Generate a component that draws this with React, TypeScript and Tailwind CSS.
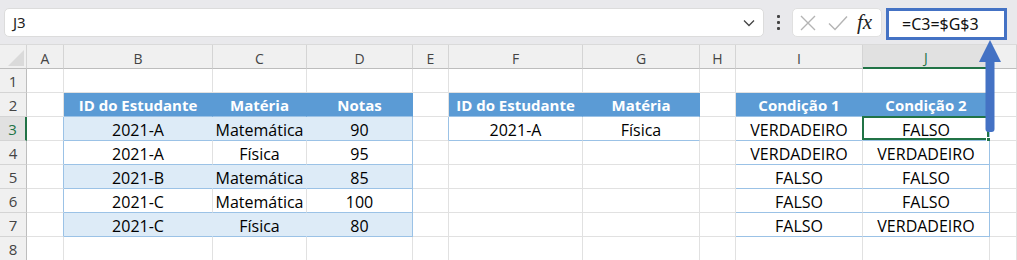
import React from "react";

type Kind = "g" | "h" | "b" | "w";

const COLS = ["A", "B", "C", "D", "E", "F", "G", "H", "I", "J", ""];

const DATA: Record<number, Record<number, string>> = {
  2: { 1: "ID do Estudante", 2: "Matéria", 3: "Notas", 5: "ID do Estudante", 6: "Matéria", 8: "Condição 1", 9: "Condição 2" },
  3: { 1: "2021-A", 2: "Matemática", 3: "90", 5: "2021-A", 6: "Física", 8: "VERDADEIRO", 9: "FALSO" },
  4: { 1: "2021-A", 2: "Física", 3: "95", 8: "VERDADEIRO", 9: "VERDADEIRO" },
  5: { 1: "2021-B", 2: "Matemática", 3: "85", 8: "FALSO", 9: "FALSO" },
  6: { 1: "2021-C", 2: "Matemática", 3: "100", 8: "FALSO", 9: "FALSO" },
  7: { 1: "2021-C", 2: "Física", 3: "80", 8: "FALSO", 9: "VERDADEIRO" },
};

function inT1(r: number, c: number) {
  return r >= 2 && r <= 7 && c >= 1 && c <= 3;
}
function inT2(r: number, c: number) {
  return r >= 2 && r <= 3 && c >= 5 && c <= 6;
}
function inT3(r: number, c: number) {
  return r >= 2 && r <= 7 && c >= 8 && c <= 9;
}

function kindOf(r: number, c: number): Kind {
  const any = inT1(r, c) || inT2(r, c) || inT3(r, c);
  if (!any) return "g";
  if (r === 2) return "h";
  if (inT1(r, c)) return r % 2 === 1 ? "b" : "w";
  return "w";
}

const KIND_CLASS: Record<Kind, string> = {
  g: "bg-white text-black text-[16px]",
  h: "bg-[#5b9bd5] text-white font-bold text-[15px]",
  b: "bg-[#ddebf7] text-black text-[16px]",
  w: "bg-white text-black text-[16px]",
};

const RB: Record<string, string> = {
  grid: "border-r-[#e1e1e1]",
  blue: "border-r-[#9bc2e6]",
  band: "border-r-[#ddebf7]",
  head: "border-r-[#5b9bd5]",
};
const BB: Record<string, string> = {
  grid: "border-b-[#e1e1e1]",
  blue: "border-b-[#9bc2e6]",
};

function rightKey(r: number, c: number): string {
  const k = kindOf(r, c);
  if (c === 0 && r >= 3 && r <= 7) return "blue";
  if (c === 4 && r === 3) return "blue";
  if (k === "h") return "head";
  if (inT1(r, c) && c === 3) return "blue";
  if (inT3(r, c) && c === 9) return "blue";
  if (k === "b") return "band";
  return "grid";
}

function bottomKey(r: number, c: number): string {
  const k = kindOf(r, c);
  if (k === "g") return "grid";
  return "blue";
}

function ColHeader({ label, selected }: { label: string; selected: boolean }) {
  if (selected) {
    return (
      <div className="flex items-center justify-center h-[24px] pt-[3px] bg-[#e1e1e1] border-r border-r-[#d4d4d4] border-b-2 border-b-[#217346] text-[#217346] text-[14px]">
        {label}
      </div>
    );
  }
  return (
    <div className="flex items-center justify-center h-[24px] pt-[3px] bg-[#f0f0f0] border-r border-r-[#d4d4d4] border-b border-b-[#bdbdbd] text-[#444444] text-[14px]">
      {label}
    </div>
  );
}

function RowHeader({ n }: { n: number }) {
  if (n === 3) {
    return (
      <div className="flex items-center justify-center h-[24px] pt-[2px] bg-[#e1e1e1] border-r-2 border-r-[#217346] border-b border-b-[#d4d4d4] text-[#217346] text-[15px]">
        {n}
      </div>
    );
  }
  return (
    <div className="flex items-center justify-center h-[24px] pt-[2px] bg-[#f0f0f0] border-r border-r-[#bdbdbd] border-b border-b-[#d4d4d4] text-[#444444] text-[15px]">
      {n}
    </div>
  );
}

function Cell({ r, c }: { r: number; c: number }) {
  const k = kindOf(r, c);
  const text = DATA[r]?.[c] ?? "";
  const selected = r === 3 && c === 9;
  return (
    <div
      className={`relative flex items-center justify-center h-[24px] pt-[2px] border-r border-b whitespace-nowrap ${KIND_CLASS[k]} ${RB[rightKey(r, c)]} ${BB[bottomKey(r, c)]}`}
    >
      {text}
      {selected && (
        <>
          <div className="absolute -left-[1px] -top-[1px] right-0 bottom-0 border-2 border-[#217346]" />
          <div className="absolute -right-[4px] -bottom-[4px] w-[7px] h-[7px] bg-[#217346] border border-white" />
        </>
      )}
    </div>
  );
}

export default function App() {
  const rows = [1, 2, 3, 4, 5, 6, 7, 8];
  return (
    <div className="relative w-[1017px] h-[260px] overflow-hidden bg-white font-['Open_Sans',sans-serif]">
      {/* Formula bar */}
      <div className="flex items-start h-[45px] pt-[8px] bg-[#e9e9ec] border-b border-b-[#dadada]">
        <div className="ml-[4px] w-[760px] h-[29px] flex items-center justify-between pl-[8px] pr-[8px] bg-white rounded-[5px] border border-[#dcdcdc] text-[15px] text-[#222222] font-['Noto_Sans',sans-serif]">
          <span>J3</span>
          <svg width="12" height="8" viewBox="0 0 12 8">
            <path d="M1 1.5 L6 6.5 L11 1.5" fill="none" stroke="#444444" strokeWidth="1.3" />
          </svg>
        </div>
        <div className="w-[28px] h-[29px] flex flex-col items-center justify-center gap-[3px]">
          <div className="w-[3px] h-[3px] bg-[#444444] rounded-[1px]" />
          <div className="w-[3px] h-[3px] bg-[#444444] rounded-[1px]" />
          <div className="w-[3px] h-[3px] bg-[#444444] rounded-[1px]" />
        </div>
        <div className="w-[90px] h-[29px] flex items-center bg-white rounded-[5px] border border-[#e0e0e0]">
          <svg width="18" height="18" viewBox="0 0 18 18" className="ml-[6px]">
            <path d="M2 2 L16 16 M16 2 L2 16" stroke="#b4b4b4" strokeWidth="1.4" fill="none" />
          </svg>
          <svg width="22" height="18" viewBox="0 0 22 18" className="ml-[10px]">
            <path d="M2 9.5 L8 15.5 L20 2.5" stroke="#b4b4b4" strokeWidth="1.4" fill="none" />
          </svg>
          <span className="ml-[8px] text-[21px] italic font-['Liberation_Serif',serif] text-[#222222] leading-none">fx</span>
        </div>
        <div className="ml-[4px] w-[121px] h-[32px] flex items-center pl-[13px] bg-white border-[3px] border-[#4472c4] text-[16px] text-[#111111] font-['Noto_Sans',sans-serif]">
          =C3=$G$3
        </div>
      </div>

      {/* Grid */}
      <div className="grid grid-cols-[27px_37px_149px_94px_106px_36px_134px_117px_36px_127px_127px_27px]">
        <div className="relative h-[24px] bg-[#f0f0f0] border-r border-r-[#d4d4d4] border-b border-b-[#bdbdbd]">
          <svg width="16" height="16" viewBox="0 0 16 16" className="absolute left-[8px] top-[5px]">
            <path d="M16 0 L16 16 L0 16 Z" fill="#dadada" />
          </svg>
        </div>
        {COLS.map((l, i) => (
          <ColHeader key={i} label={l} selected={l === "J"} />
        ))}
        {rows.map((r) => (
          <React.Fragment key={r}>
            <RowHeader n={r} />
            {COLS.map((_, c) => (
              <Cell key={c} r={r} c={c} />
            ))}
          </React.Fragment>
        ))}
      </div>

      {/* Arrow overlay */}
      <svg width="26" height="96" viewBox="0 0 26 96" className="absolute left-[977px] top-[39px]">
        <path d="M13 1 L24 23 L2 23 Z" fill="#4472c4" />
        <rect x="8.5" y="20" width="9" height="73" rx="3" fill="#4472c4" />
      </svg>
    </div>
  );
}
